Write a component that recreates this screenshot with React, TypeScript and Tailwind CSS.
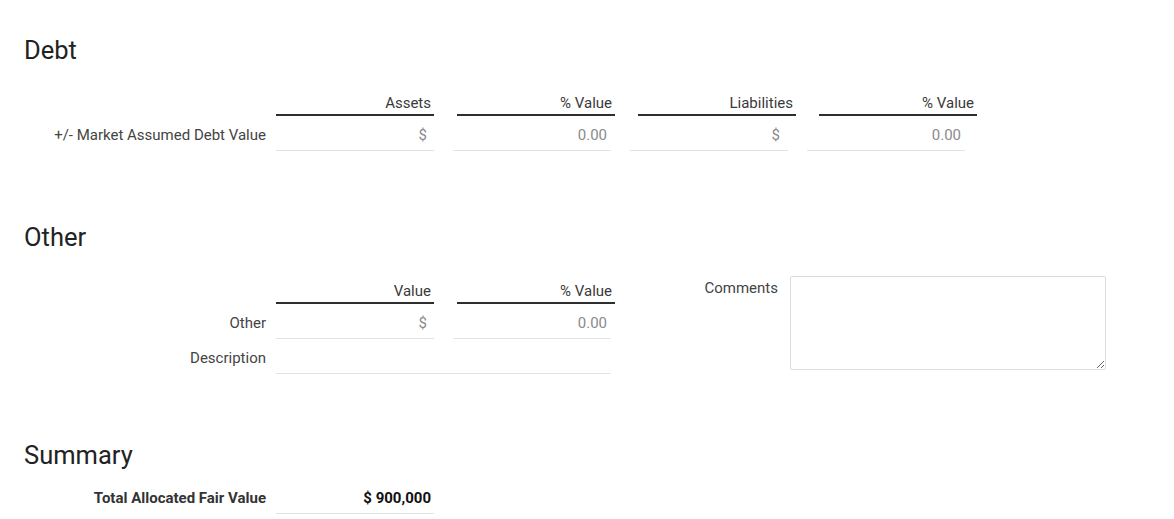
import React from "react";

const font = { fontFamily: "Roboto, 'Noto Sans', sans-serif" };

function HeaderCell({ children }: { children: React.ReactNode }) {
  return (
    <div className="w-[158px] h-[24px] border-b-2 border-[#2e2e2e] flex items-center justify-end pr-[3px] text-[15px] leading-[20px] text-[#3a3a3a]">
      {children}
    </div>
  );
}

function InputCell({ children, pr = "pr-[7px]", w = "w-[158px]" }: { children?: React.ReactNode; pr?: string; w?: string }) {
  return (
    <div className={`${w} h-[35px] border-b border-[#e3e3e3] flex items-center justify-end pt-[3px] ${pr} text-[15px] leading-[20px] text-[#8a8a8a]`}>
      {children}
    </div>
  );
}

function Label({ children, bold }: { children: React.ReactNode; bold?: boolean }) {
  return (
    <div className={`w-[242px] h-[35px] flex items-center justify-end pt-[3px] text-[15px] leading-[20px] ${bold ? "font-bold text-[#333]" : "text-[#444]"}`}>
      {children}
    </div>
  );
}

export default function App() {
  return (
    <div style={font} className="w-[1174px] h-[519px] bg-white overflow-hidden pl-6 pt-[34px]">
      {/* Debt */}
      <h2 className="text-[25.5px] leading-[32px] text-[#222]">Debt</h2>
      <div className="mt-[26px] flex">
        <div className="w-[252px]" />
        <div className="flex gap-[23px]">
          <HeaderCell>Assets</HeaderCell>
          <HeaderCell>% Value</HeaderCell>
          <HeaderCell>Liabilities</HeaderCell>
          <HeaderCell>% Value</HeaderCell>
        </div>
      </div>
      <div className="flex">
        <Label>+/- Market Assumed Debt Value</Label>
        <div className="w-[10px]" />
        <div className="flex gap-[19px]">
          <InputCell>$</InputCell>
          <InputCell pr="pr-[4px]">0.00</InputCell>
          <InputCell pr="pr-[8px]">$</InputCell>
          <InputCell pr="pr-[4px]">0.00</InputCell>
        </div>
      </div>

      {/* Other */}
      <h2 className="mt-[70px] text-[25.5px] leading-[32px] text-[#222]">Other</h2>
      <div className="mt-[23px] flex items-start">
        <div className="flex flex-col">
          <div className="flex mt-[4px]">
            <div className="w-[252px]" />
            <div className="flex gap-[23px]">
              <HeaderCell>Value</HeaderCell>
              <HeaderCell>% Value</HeaderCell>
            </div>
          </div>
          <div className="flex">
            <Label>Other</Label>
            <div className="w-[10px]" />
            <div className="flex gap-[19px]">
              <InputCell>$</InputCell>
              <InputCell pr="pr-[4px]">0.00</InputCell>
            </div>
          </div>
          <div className="flex">
            <Label>Description</Label>
            <div className="w-[10px]" />
            <InputCell w="w-[335px]" />
          </div>
        </div>
        <div className="ml-[24px] flex items-start">
          <div className="w-[139px] pt-[2px] text-right text-[15px] leading-[20px] text-[#444]">Comments</div>
          <textarea className="ml-[12px] w-[316px] h-[94px] border border-[#dcdcdc] rounded-[2px] outline-none" />
        </div>
      </div>

      {/* Summary */}
      <h2 className="mt-[65px] text-[25.5px] leading-[32px] text-[#222]">Summary</h2>
      <div className="mt-[8px] flex">
        <Label bold>Total Allocated Fair Value</Label>
        <div className="w-[10px]" />
        <div className="w-[158px] h-[35px] border-b border-[#e3e3e3] flex items-center justify-end pt-[3px] pr-[3px] text-[15px] leading-[20px] font-bold text-[#111]">
          $ 900,000
        </div>
      </div>
    </div>
  );
}
